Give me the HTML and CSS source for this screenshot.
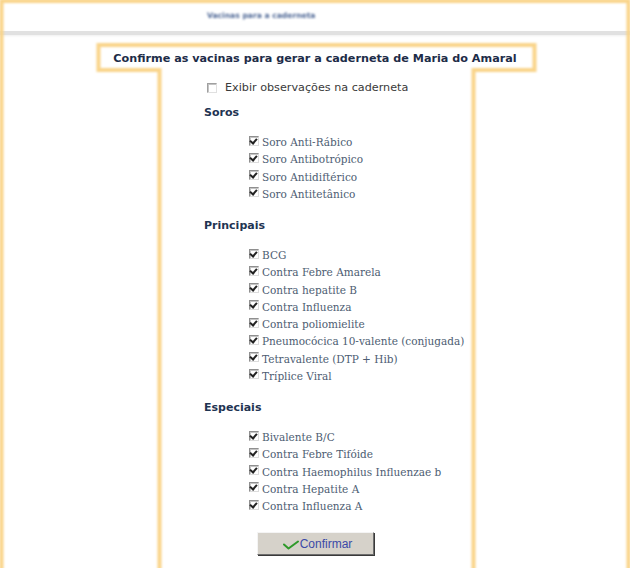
FILE: index.html
```html
<!DOCTYPE html>
<html lang="pt">
<head>
<meta charset="utf-8">
<title>Vacinas para a caderneta</title>
<link rel="stylesheet" href="styles.css">
</head>
<body>
<div class="page">
  <div class="header"><span class="header-title">Vacinas para a caderneta</span></div>
  <div class="main">
    <h1 class="title">Confirme as vacinas para gerar a caderneta de Maria do Amaral</h1>
    <div class="form">
      <label class="obs"><span class="cb"></span>Exibir observações na caderneta</label>

      <h2 class="group">Soros</h2>
      <ul class="items">
        <li><span class="cb on"></span>Soro Anti-Rábico</li>
        <li><span class="cb on"></span>Soro Antibotrópico</li>
        <li><span class="cb on"></span>Soro Antidiftérico</li>
        <li><span class="cb on"></span>Soro Antitetânico</li>
      </ul>

      <h2 class="group">Principais</h2>
      <ul class="items">
        <li><span class="cb on"></span>BCG</li>
        <li><span class="cb on"></span>Contra Febre Amarela</li>
        <li><span class="cb on"></span>Contra hepatite B</li>
        <li><span class="cb on"></span>Contra Influenza</li>
        <li><span class="cb on"></span>Contra poliomielite</li>
        <li><span class="cb on"></span>Pneumocócica 10-valente (conjugada)</li>
        <li><span class="cb on"></span>Tetravalente (DTP + Hib)</li>
        <li><span class="cb on"></span>Tríplice Viral</li>
      </ul>

      <h2 class="group">Especiais</h2>
      <ul class="items">
        <li><span class="cb on"></span>Bivalente B/C</li>
        <li><span class="cb on"></span>Contra Febre Tifóide</li>
        <li><span class="cb on"></span>Contra Haemophilus Influenzae b</li>
        <li><span class="cb on"></span>Contra Hepatite A</li>
        <li><span class="cb on"></span>Contra Influenza A</li>
      </ul>
    </div>
    <div class="actions">
      <button class="btn" type="button">
        <svg class="btn-icon" width="16" height="10" viewBox="0 0 16 10"><path d="M1 4.5 L5.5 8.5 L15 1.5" fill="none" stroke="#2f9a2a" stroke-width="2" stroke-linecap="round" stroke-linejoin="round"/></svg>
        Confirmar
      </button>
    </div>
  </div>
  <svg class="highlight" width="630" height="568" viewBox="0 0 630 568">
    <defs><filter id="soft" x="-5%" y="-5%" width="110%" height="110%"><feGaussianBlur stdDeviation="0.9"/></filter></defs>
    <g fill="none" stroke="#f9d48a" stroke-width="4" filter="url(#soft)">
      <path d="M1.5 600 V1 H628.5 V600"/>
      <path d="M159.5 570 V70 H98.5 V45 H534.5 V70 H473.5 V570"/>
    </g>
  </svg>
</div>
</body>
</html>
```

FILE: styles.css
```css
html, body {
  margin: 0;
  padding: 0;
  background: #ffffff;
}

.page {
  position: relative;
  width: 630px;
  height: 568px;
  overflow: hidden;
  font-family: "DejaVu Sans", Verdana, sans-serif;
}

.header {
  height: 31px;
  display: flex;
  align-items: center;
  padding-left: 207px;
  border-bottom: 4px solid #e1e1e1;
  box-shadow: 0 1px 2px #efefef;
}

.header-title {
  font-size: 7.6px;
  font-weight: bold;
  color: #4f6896;
  filter: blur(1.3px);
}

.main {
  padding-top: 15px;
}

.title {
  margin: 0;
  text-align: center;
  font-size: 11.2px;
  line-height: 17px;
  font-weight: bold;
  color: #1d2c48;
}

.form {
  margin-left: 204px;
  padding-top: 12px;
}

.obs {
  display: flex;
  align-items: center;
  font-size: 11.2px;
  line-height: 17px;
  color: #3a3a3a;
}

.obs .cb {
  margin: 0 8px 0 3px;
  border-color: #a0a0a0;
  border-right-color: #e0e0e0;
  border-bottom-color: #e0e0e0;
}

.cb {
  flex: none;
  display: inline-block;
  box-sizing: border-box;
  width: 10px;
  height: 10px;
  border: 1px solid #8f8f8f;
  border-right-color: #dcdcdc;
  border-bottom-color: #dcdcdc;
  background: #ffffff;
  box-shadow: inset 1px 1px 0 #c4c4c4;
  position: relative;
}

.cb.on::after {
  content: "";
  position: absolute;
  left: 1px;
  top: 0px;
  width: 3px;
  height: 5px;
  border-right: 2px solid #222;
  border-bottom: 2px solid #222;
  transform: rotate(40deg);
}

.group {
  margin: 8px 0 0;
  font-size: 11px;
  line-height: 17px;
  font-weight: bold;
  color: #1f3452;
}

.items {
  list-style: none;
  margin: 13px 0 14px;
  padding: 0 0 0 45px;
}

.items li {
  display: flex;
  align-items: center;
  font-family: "DejaVu Serif", Georgia, serif;
  font-size: 10.5px;
  line-height: 17.25px;
  color: #4d5d72;
}

.items .cb {
  margin-right: 3px;
  margin-top: -4px;
}

.actions {
  display: flex;
  padding-left: 257px;
  padding-top: 3px;
}

.btn {
  width: 117px;
  height: 23px;
  display: flex;
  align-items: center;
  justify-content: center;
  gap: 1px;
  padding: 0 0 0 4px;
  background: #d6d2ca;
  border: 1px solid;
  border-color: #f4f4f4 #6e6e6e #6e6e6e #f4f4f4;
  box-shadow: 1px 1px 0 #3a3a3a;
  font-family: "Liberation Sans", Arial, sans-serif;
  font-size: 12px;
  color: #3b4aa8;
}

.btn-icon {
  display: block;
  margin-top: 2px;
}

.highlight {
  position: absolute;
  left: 0;
  top: 0;
  pointer-events: none;
}
```
